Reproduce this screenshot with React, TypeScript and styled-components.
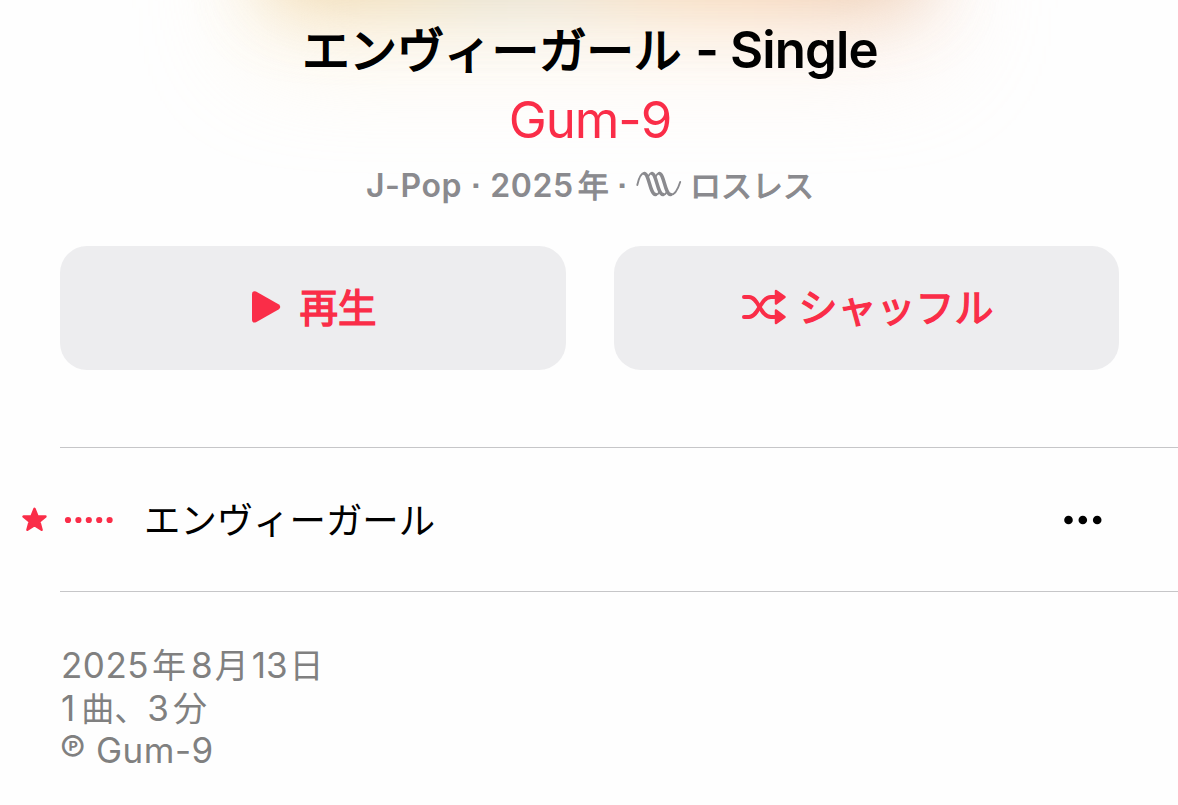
import React from 'react'

import styled, { createGlobalStyle } from 'styled-components'

const GlobalStyle = createGlobalStyle`
  * {
    box-sizing: border-box;
  }

  body {
    margin: 0;
    background: #fefefe;
    font-family: Inter, 'Noto Sans CJK JP', sans-serif;
    font-feature-settings: 'calt' 0;
  }
`

const Page = styled.main`
  position: relative;
  display: flex;
  flex-direction: column;
  height: 805px;
  overflow: hidden;
`

const ArtworkGlow = styled.div`
  position: absolute;
  left: 270px;
  top: -200px;
  width: 650px;
  height: 202px;
  filter: blur(38px);
  opacity: 0.75;
  background: linear-gradient(90deg, #e8c890 0%, #ead0a0 16%, #d4d2bc 34%, #dcd4c4 44%, #ecd0aa 56%, #f4c8a0 72%, #dfb898 100%);
`

const AmbientGlow = styled(ArtworkGlow)`
  left: 260px;
  width: 670px;
  height: 246px;
  filter: blur(58px);
  opacity: 0.5;
  background: linear-gradient(90deg, #fce8c0 0%, #fcecd0 40%, #fde2c8 75%, #fbdccc 100%);
`

const Header = styled.header`
  position: relative;
  display: flex;
  flex-direction: column;
  align-items: center;
  padding: 13px 0 0 2px;
`

const Latin = styled.span<{ $track?: number; $before?: number }>`
  margin-left: ${p => p.$before ?? 0}px;
  letter-spacing: ${p => p.$track ?? 0}px;
`

const Kana = styled.span<{ $size: number; $stroke?: number; $before?: number }>`
  margin-left: ${p => p.$before ?? 0}px;
  font-family: 'Noto Sans CJK JP', sans-serif;
  font-size: ${p => p.$size}px;
  font-weight: 400;
  -webkit-text-stroke: ${p => p.$stroke ?? 0}px currentColor;
`

const Title = styled.h1`
  display: flex;
  align-items: baseline;
  margin: 0;
  height: 73px;
  line-height: 70px;
  font-size: 51px;
  font-weight: 600;
  color: #000;
  white-space: pre;
`

const Artist = styled.div`
  height: 66px;
  line-height: 68px;
  font-size: 51px;
  letter-spacing: -1.1px;
  color: #fa2d48;
`

const Meta = styled.div`
  display: flex;
  align-items: baseline;
  height: 64px;
  line-height: 64px;
  font-size: 32px;
  font-weight: 600;
  font-feature-settings: 'calt' 0, 'ss07' 1;
  color: #8a8a8e;
  white-space: pre;
`

const LosslessIcon = styled.svg`
  width: 46px;
  height: 26px;
  margin: 0 8px 0 9px;
  align-self: center;
`

const Actions = styled.div`
  display: grid;
  grid-template-columns: 506px 505px;
  gap: 48px;
  margin: 30px 0 0 60px;
`

const ActionButton = styled.button`
  display: flex;
  align-items: center;
  justify-content: center;
  height: 124px;
  padding: 0 0 2px;
  border: 0;
  border-radius: 27px;
  background: #ededef;
  color: #fa2d48;
`

const ActionLabel = styled.span`
  padding-bottom: 4px;
`

const PlayIcon = styled.svg`
  width: 30px;
  height: 34px;
  margin-left: 2px;
  margin-right: 18px;
`

const ShuffleIcon = styled.svg`
  width: 46px;
  height: 38px;
  margin-left: 2px;
  margin-right: 11px;
`

const Track = styled.div`
  display: flex;
  align-items: center;
  height: 145px;
  margin-top: 77px;
  margin-left: 60px;
  border-top: 1px solid #c6c6c8;
  border-bottom: 1px solid #c6c6c8;
`

const StarIcon = styled.svg`
  width: 28px;
  height: 28px;
  margin-left: -40px;
  flex: none;
`

const PlayingDots = styled.svg`
  width: 50px;
  height: 8px;
  margin-left: 16px;
`

const TrackName = styled.div`
  flex: 1;
  margin-left: 30px;
  padding-bottom: 3px;
  color: #000;
`

const MoreButton = styled.svg`
  width: 40px;
  height: 10px;
  margin-right: 75px;
`

const Footer = styled.footer`
  display: flex;
  flex-direction: column;
  margin: 50px 0 0 61px;
  color: #808080;
  font-size: 35px;
`

const FooterLine = styled.div`
  display: flex;
  align-items: baseline;
  height: 43px;
  line-height: 43px;
  white-space: pre;
`

const Phonogram = styled.span`
  width: 36px;
  margin-left: -1px;
  font-size: 38px;
`

export default function App() {
  return (
    <Page>
      <GlobalStyle />
      <AmbientGlow />
      <ArtworkGlow />
      <Header>
        <Title>
          <Kana $size={47.4} $stroke={1.8}>エンヴィーガール</Kana>
          <Latin $track={-0.9} $before={2}> - Single</Latin>
        </Title>
        <Artist>Gum-9</Artist>
        <Meta>
          <Latin $track={0.6}>J-Pop · 2025</Latin>
          <Kana $size={31} $stroke={1.1} $before={4}>年</Kana>
          <Latin> ·</Latin>
          <LosslessIcon viewBox="0 0 46 26" fill="none" stroke="currentColor" strokeLinecap="round">
            <path d="M1.3 14C3 6 5.5 2 8.5 2" strokeWidth="1.9" />
            <path d="M12.5 5C13.5 3 14.5 2 16 2M20 5C21 3 22 2 23.5 2" strokeWidth="1.7" />
            <path d="M8.5 2.4C13 3 14 23 19.5 23.6M16 2.4C20.5 3 21.5 23 27 23.6M23.5 2.4C28 3 29 23 34.5 23.6" strokeWidth="3.5" />
            <path d="M19.5 24C21 24 22 23.5 23 21.5M27 24C28.5 24 29.5 23.5 30.5 21.5" strokeWidth="1.7" />
            <path d="M34.5 24C38.5 24 42 18 44.2 11" strokeWidth="1.9" />
          </LosslessIcon>
          <Kana $size={31} $stroke={1.1}>ロスレス</Kana>
        </Meta>
      </Header>

      <Actions>
        <ActionButton>
          <PlayIcon viewBox="0 0 30 34" fill="currentColor">
            <path d="M1 4.5Q1 .5 5 1.5L27.5 14.3Q31 17 27.5 19.5L5 32.3Q1 33.5 1 29.5Z" />
          </PlayIcon>
          <ActionLabel>
            <Kana $size={38.5} $stroke={1.4}>再生</Kana>
          </ActionLabel>
        </ActionButton>
        <ActionButton>
          <ShuffleIcon viewBox="0 0 46 38" fill="none" stroke="currentColor" strokeWidth="4" strokeLinecap="round">
            <path d="M3 9H8C18 9 19 29 30 29H35" />
            <path d="M3 29H8C18 29 19 9 30 9H35" />
            <path d="M35 3L43.5 9L35 15.5ZM35 22.5L43.5 29L35 35Z" fill="currentColor" strokeWidth="2.5" strokeLinejoin="round" />
          </ShuffleIcon>
          <ActionLabel>
            <Kana $size={39} $stroke={1.4}>シャッフル</Kana>
          </ActionLabel>
        </ActionButton>
      </Actions>

      <Track>
        <StarIcon viewBox="0 0 28 28" fill="#fa2d48" stroke="#fa2d48" strokeWidth="2.4" strokeLinejoin="round">
          <path d="M14.5 2.8L17.6 10.5H25.5L19.4 15.5L21.6 23.8L14.5 19.3L7.4 23.8L9.6 15.5L3.5 10.5H11.4Z" />
        </StarIcon>
        <PlayingDots viewBox="0 0 50 8" fill="#fa2d48">
          {[4, 14.4, 24.8, 35.2, 45.6].map(x => (
            <circle key={x} cx={x} cy="4" r="3.1" />
          ))}
        </PlayingDots>
        <TrackName>
          <Kana $size={36.4}>エンヴィーガール</Kana>
        </TrackName>
        <MoreButton viewBox="0 0 40 10" fill="#000">
          <circle cx="5.5" cy="5" r="4.3" />
          <circle cx="19.8" cy="5" r="4.3" />
          <circle cx="34.2" cy="5" r="4.3" />
        </MoreButton>
      </Track>

      <Footer>
        <FooterLine>
          <Latin $track={0.5}>2025</Latin>
          <Kana $size={34} $before={3}>年</Kana>
          <Latin $before={5}>8</Latin>
          <Kana $size={34} $before={2}>月</Kana>
          <Latin $before={3}>13</Latin>
          <Kana $size={34} $before={2}>日</Kana>
        </FooterLine>
        <FooterLine>
          <Latin>1</Latin>
          <Kana $size={33} $before={6}>曲、</Kana>
          <Latin>3</Latin>
          <Kana $size={34} $before={4}>分</Kana>
        </FooterLine>
        <FooterLine>
          <Phonogram>℗</Phonogram>
          <Latin $track={0.5}>Gum-9</Latin>
        </FooterLine>
      </Footer>
    </Page>
  )
}
